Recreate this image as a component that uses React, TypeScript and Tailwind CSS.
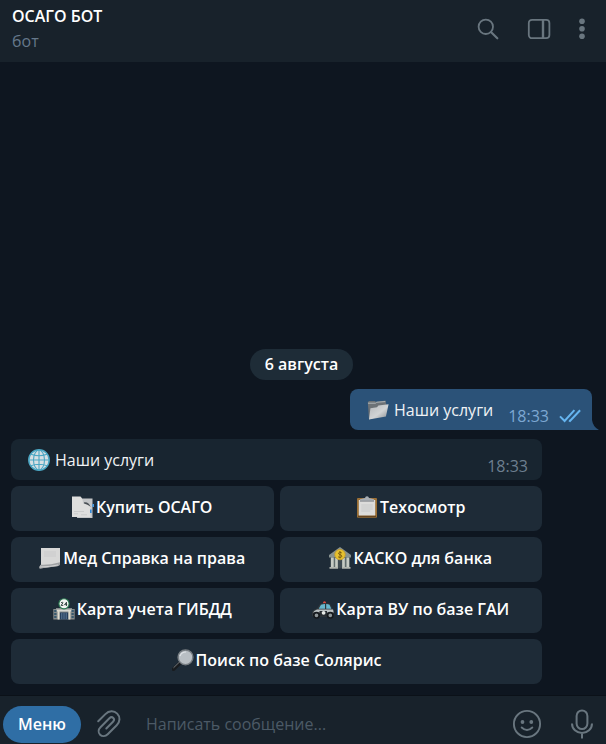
import type { ReactNode } from "react";

function SearchIcon() {
  return (
    <svg width="22" height="22" viewBox="0 0 22 22" fill="none" stroke="currentColor" strokeWidth="1.8" strokeLinecap="round">
      <circle cx="8.8" cy="8.8" r="7.2" />
      <path d="M14.2 14.2 20.3 20.3" strokeWidth="2.2" />
    </svg>
  );
}

function PanelIcon() {
  return (
    <svg width="24" height="22" viewBox="0 0 24 22" fill="none" stroke="currentColor" strokeWidth="1.8">
      <rect x="1.8" y="1.8" width="20.6" height="18.4" rx="3.2" />
      <path d="M16 2v18" strokeWidth="2.4" />
    </svg>
  );
}

function DotsIcon() {
  return (
    <svg width="6" height="22" viewBox="0 0 6 22" fill="currentColor">
      <circle cx="3" cy="3.2" r="2.8" />
      <circle cx="3" cy="10.7" r="2.8" />
      <circle cx="3" cy="18.2" r="2.8" />
    </svg>
  );
}

function ChecksIcon() {
  return (
    <svg width="22" height="14" viewBox="0 0 22 14" fill="none" stroke="#66b5f0" strokeWidth="2">
      <path d="M1 7.4 5.6 12 15.4 1.2M10 11.4l1 .6L21.1 1.2" />
    </svg>
  );
}

function FolderIcon() {
  return (
    <svg width="22" height="22" viewBox="0 0 22 22">
      <defs>
        <linearGradient id="folder" x1="0" y1="0" x2="1" y2="1">
          <stop offset="0" stopColor="#b4b7ba" />
          <stop offset=".55" stopColor="#d2d4d5" />
          <stop offset="1" stopColor="#868a8e" />
        </linearGradient>
      </defs>
      <path d="M.8 3.2 2 2h6l1 1 9.5-1.4.8 4v8L2 20.5Z" fill="#6d7276" />
      <path d="M1 4.2h7.5l1.2-1 8.6-.6" fill="none" stroke="#b9bdc0" strokeWidth=".9" />
      <path d="M3.4 9.3 10 8.2l1.4-1.7 10.2-1.2-2.7 12.3L2 20.6Z" fill="url(#folder)" />
    </svg>
  );
}

function GlobeIcon() {
  return (
    <svg width="22" height="22" viewBox="0 0 22 22" fill="none" stroke="#4ba6c3" strokeWidth="1.1">
      <circle cx="11" cy="11" r="10.2" fill="#d7dfe3" strokeWidth="1.5" />
      <ellipse cx="11" cy="11" rx="5.5" ry="10" />
      <path d="M11 1v20M1 11h20M3 5.3q8 3 16 0M3 16.7q8-3 16 0" />
    </svg>
  );
}

function BookmarkPagesIcon() {
  return (
    <svg width="22" height="22" viewBox="0 0 22 22">
      <path d="M8 2.500h12.500v19.500H5Z" fill="#c3c5c7" />
      <path d="M12 6.300q5-.6 6.500 4.700-3-1.800-6-1.800Z" fill="#4a5055" />
      <path d="M0 .500h8.500q2.500 2 2.500 7 5 .5 7.500 3.500V21H0Z" fill="#dededd" />
      <path d="M2 15.500h10M2 17.800h4M9 18.800h6" stroke="#c2c3c3" strokeWidth=".7" />
      <path d="M18 13.500h1.600V17H18Z" fill="#3189db" />
      <path d="M20.300 8H22v3h-1.700Z" fill="#4b9be3" />
    </svg>
  );
}

function ClipboardIcon() {
  return (
    <svg width="22" height="22" viewBox="0 0 22 22">
      <rect x="1" y="2" width="20" height="19.700" rx="1" fill="#9c7036" />
      <rect x="2" y="19.500" width="18" height="1.600" fill="#66451f" />
      <path d="M2.800 4h16.400v15.500H2.800Z" fill="#dcdcdb" />
      <path d="M5.300 9h11.400M5.300 11h11.400M5.300 13h11.400M5.300 15h9" stroke="#c3c5c6" strokeWidth=".8" />
      <path d="M4 3.300 9 2Q9.300.3 11 .3T13 2l5 1.300V5H4Z" fill="#a9aeb4" />
      <path d="M4 5.200h14" stroke="#777b80" strokeWidth=".8" />
    </svg>
  );
}

function PageIcon() {
  return (
    <svg width="22" height="22" viewBox="0 0 22 22">
      <path d="M2 1h19v15q0 2.500-2.500 3L.8 21.600q-1-2 1.200-4Z" fill="#d8d8d7" />
      <path d="M2 17.800q8 .5 19-2.500v2q0 1.500-2.500 2L.8 21.600q-1.200-2 1.200-3.800Z" fill="#a0a2a4" />
      <path d="M1 20q10-.2 18-2" fill="none" stroke="#dedede" strokeWidth=".8" />
      <path d="M5 5h12M5 7h12M5 9h12" stroke="#c5c6c6" strokeWidth=".7" />
    </svg>
  );
}

function BankIcon() {
  return (
    <svg width="22" height="22" viewBox="0 0 22 22">
      <path d="M0 8 11 0l11 8v2.500H0Z" fill="#87928f" />
      <path d="M1.500 10h19v11h-19Z" fill="#5f6c6c" />
      <path d="M2 10.500h2.700V20H2ZM6.200 11h2.600v9H6.200ZM13.200 11h2.600v9h-2.600ZM17.500 10.500h2.700V20h-2.700Z" fill="#c5cbc4" />
      <path d="M9 13h4v8.500H9Z" fill="#3e4b52" />
      <path d="M.5 20H9v1.800H.5ZM13 20h8.500v1.800H13Z" fill="#b1b6b0" />
      <circle cx="11" cy="7.600" r="5.200" fill="#e5c12f" stroke="#c89a20" strokeWidth=".7" />
      <path d="M12.800 5.900q-3-1.500-3.400.3c0 1.600 3.400 1.200 3.400 3-.2 1.800-2.800 1.400-3.800.5M11 4v7.500" fill="none" stroke="#77580f" strokeWidth=".9" />
    </svg>
  );
}

function StoreIcon() {
  return (
    <svg width="22" height="22" viewBox="0 0 22 22">
      <path d="M3 10h16v1h2.700v10.500H.3V11H3Z" fill="#858b8b" />
      <path d="M3.500 11.500h15v2h-15Z" fill="#d8d9d4" />
      <path d="M1.200 12H3.500v2H1.200ZM1.200 15H3.500v2H1.200ZM1.200 18H3.500v2H1.200ZM18.500 12h2.300v2h-2.300ZM18.500 15h2.300v2h-2.300ZM18.500 18h2.300v2h-2.300Z" fill="#385a70" />
      <path d="M6.500 14.500h9v7h-9Z" fill="#263e5c" />
      <path d="M4.600 12h2v9.500h-2ZM15.400 12h2v9.500h-2Z" fill="#dedbcd" />
      <path d="M8.800 15v6M11 15v6M13.200 15v6" stroke="#6f8ba7" strokeWidth=".8" />
      <circle cx="11" cy="5.800" r="5.100" fill="#f3f5f2" stroke="#28794f" strokeWidth="1.100" />
      <path d="M8 4.800q2-1.300 2 .1L8 7.400h2.300M13.500 7.900V4.200l-2 2.500h2.700" fill="none" stroke="#273a35" strokeWidth=".9" />
    </svg>
  );
}

function PoliceCarIcon() {
  return (
    <svg width="22" height="22" viewBox="0 0 22 22">
      <path d="M11 4.200q1.500-2 3 0v2h-3Z" fill="#df4b3d" />
      <path d="M5 10.500 8 6q5-2 10-.1l2.700 5L22 12.500V18l-2 1H2l-2-1.300V14q1.500-3 5-3.500Z" fill="#30373c" />
      <path d="m6.700 10.800 2.300-4q2-.9 4-.9v4.900ZM14.200 5.900q2 0 3.300.8l1.800 4.100h-5.100Z" fill="#68b8ce" />
      <path d="M5 11.500h16l.7 3H1Q2.200 12.300 5 11.500Z" fill="#bbc2c4" />
      <path d="M7.500 13h7.500v5.500H7.500Z" fill="#272d32" />
      <circle cx="11.600" cy="14.800" r="1.900" fill="#e6e9e7" />
      <circle cx="4.500" cy="17.300" r="2.700" fill="#8e9699" stroke="#15191d" strokeWidth="1.700" />
      <circle cx="18.300" cy="17.300" r="2.700" fill="#8e9699" stroke="#15191d" strokeWidth="1.700" />
    </svg>
  );
}

function MagnifierIcon() {
  return (
    <svg width="22" height="22" viewBox="0 0 22 22">
      <path d="m9 13-7.500 7.300" stroke="#191c1f" strokeWidth="3.500" strokeLinecap="round" />
      <path d="m7.500 13-6 5.800" stroke="#74787b" strokeWidth="1" />
      <circle cx="13.500" cy="8.300" r="7.400" fill="#b9bfc4" stroke="#777d82" strokeWidth="1.500" />
      <path d="M8 7q1.500-4 6-4" fill="none" stroke="#dfe3e6" strokeWidth="1.200" />
    </svg>
  );
}

function PaperclipIcon() {
  return (
    <svg width="26" height="28" viewBox="0 0 26 28" fill="none" stroke="currentColor" strokeWidth="2" strokeLinecap="round">
      <path d="M2.200 11.200 9.400 4.100C13 .6 18 .4 21.200 3.600s3 8.200-.5 11.700l-9 9c-2.300 2.300-5.600 2.400-7.600.4s-1.900-5.200.4-7.500l8.900-8.900c1.200-1.200 2.900-1.300 3.900-.3s.9 2.600-.3 3.800l-6.700 6.700" />
    </svg>
  );
}

function SmileIcon() {
  return (
    <svg width="30" height="30" viewBox="0 0 30 30" fill="none" stroke="currentColor" strokeWidth="1.900" strokeLinecap="round">
      <circle cx="15" cy="15" r="13.100" />
      <circle cx="10.500" cy="13" r="1.900" fill="currentColor" stroke="none" />
      <circle cx="19.300" cy="13" r="1.900" fill="currentColor" stroke="none" />
      <path d="M9.700 18.500q5.300 5 10.600 0" />
    </svg>
  );
}

function MicIcon() {
  return (
    <svg width="24" height="30" viewBox="0 0 24 30" fill="none" stroke="currentColor" strokeWidth="2">
      <rect x="6.600" y="1.500" width="10.800" height="18.500" rx="5.400" />
      <path d="M2 14.500c0 5.500 4.500 9.500 10 9.500s10-4 10-9.500M12 24v5.500" />
    </svg>
  );
}

const services: { icon: ReactNode; label: string; wide?: boolean }[] = [
  { icon: <BookmarkPagesIcon />, label: "Купить ОСАГО" },
  { icon: <ClipboardIcon />, label: "Техосмотр" },
  { icon: <PageIcon />, label: "Мед Справка на права" },
  { icon: <BankIcon />, label: "КАСКО для банка" },
  { icon: <StoreIcon />, label: "Карта учета ГИБДД" },
  { icon: <PoliceCarIcon />, label: "Карта ВУ по базе ГАИ" },
  { icon: <MagnifierIcon />, label: "Поиск по базе Солярис", wide: true },
];

export default function App() {
  return (
    <div className="flex h-screen flex-col overflow-hidden bg-[#0e1620] font-['Open_Sans','Noto_Sans',sans-serif] text-base leading-6 text-[#f0f3f5]">
      <header className="flex shrink-0 items-center justify-between bg-[#18222b] pt-1 pr-[21px] pb-2 pl-3">
        <div>
          <h1 className="font-semibold leading-[25px] text-white">ОСАГО БОТ</h1>
          <p className="leading-[25px] text-[#65788a]">бот</p>
        </div>
        <div className="flex items-center gap-7 text-[#69767f]">
          <button type="button" aria-label="Поиск"><SearchIcon /></button>
          <button type="button" aria-label="Панель"><PanelIcon /></button>
          <button type="button" aria-label="Ещё"><DotsIcon /></button>
        </div>
      </header>

      <main className="flex min-h-0 flex-1 flex-col justify-end pb-[11px]">
        <div className="mb-[9px] flex justify-center pr-[3px]">
          <time className="rounded-full bg-[#1e2c37] px-[15px] py-1 font-semibold leading-[23px] text-white">6 августа</time>
        </div>

        <div className="relative mr-[14px] mb-[9px] flex h-[41px] items-center self-end rounded-lg rounded-br-none bg-[#2b5278] pr-[11px] pl-[17px]">
          <FolderIcon />
          <span className="ml-[5px]">Наши услуги</span>
          <time className="mt-3 ml-[15px] text-[#7da8d3]">18:33</time>
          <span className="mt-3 ml-2.5"><ChecksIcon /></span>
          <svg className="absolute bottom-0 left-full" width="7" height="10" viewBox="0 0 7 10" fill="#2b5278">
            <path d="M0 0q1 7 7 10H0Z" />
          </svg>
        </div>

        <section className="mr-16 ml-[11px]">
          <div className="mb-1.5 flex h-[41px] items-center rounded-lg bg-[#182530] pr-[14px] pl-[17px]">
            <GlobeIcon />
            <span className="ml-[5px]">Наши услуги</span>
            <time className="mt-3 ml-auto text-[#6d7f8f]">18:33</time>
          </div>
          <div className="grid grid-cols-2 gap-1.5">
            {services.map((service) => (
              <button
                key={service.label}
                type="button"
                className={`flex h-[45px] items-center justify-center gap-0.5 rounded-lg bg-[#1e2b37] pb-1 font-semibold text-white ${service.wide ? "col-span-2" : ""}`}
              >
                {service.icon}
                <span>{service.label}</span>
              </button>
            ))}
          </div>
        </section>
      </main>

      <footer className="flex h-[49px] shrink-0 items-center border-t border-[#0b1118] bg-[#18222b] pt-2 pr-3 pl-[3px] text-[#69767f]">
        <button type="button" className="h-[37px] rounded-full bg-[#2f6ea5] px-[15px] font-semibold text-white">Меню</button>
        <button type="button" aria-label="Прикрепить файл" className="ml-[15px]"><PaperclipIcon /></button>
        <input
          type="text"
          aria-label="Сообщение"
          placeholder="Написать сообщение..."
          className="ml-6 min-w-0 flex-1 bg-transparent text-white outline-none placeholder:text-[#4c5a66]"
        />
        <button type="button" aria-label="Эмодзи"><SmileIcon /></button>
        <button type="button" aria-label="Голосовое сообщение" className="ml-7"><MicIcon /></button>
      </footer>
    </div>
  );
}
